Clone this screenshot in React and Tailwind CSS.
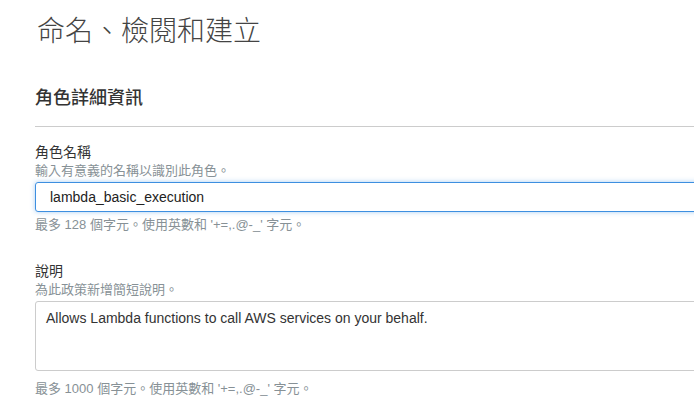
const cjk = "font-['Liberation_Sans','Noto_Sans_CJK_TC',sans-serif]";

function Field({ label, help, hint, children }) {
  return (
    <div>
      <div className="text-[14px] leading-[19px] text-[#333]">{label}</div>
      <div className="text-[13px] leading-[18px] text-[#879196]">{help}</div>
      {children}
      <div className="text-[13px] leading-[18px] text-[#879196]">{hint}</div>
    </div>
  );
}

export default function App() {
  return (
    <div className={`w-[694px] h-[419px] overflow-hidden bg-white ${cjk}`}>
      <div className="w-[780px] pl-[35px]">
        <h1 className="pt-[12px] pl-[2px] text-[28px] leading-[40px] font-light text-[#444]">
          命名、檢閱和建立
        </h1>

        <h2 className="mt-[34px] pb-[16px] border-b border-[#ccc] text-[18px] leading-[24px] font-medium text-[#333]">
          角色詳細資訊
        </h2>

        <div className="mt-[16px]">
          <Field
            label="角色名稱"
            help="輸入有意義的名稱以識別此角色。"
            hint="最多 128 個字元。使用英數和 '+=,.@-_' 字元。"
          >
            <input
              readOnly
              value="lambda_basic_execution"
              className="mt-[2px] mb-[4px] block w-full h-[30px] rounded-[3px] border border-[#3d8fe0] pl-[14px] text-[14px] text-[#222] outline-none shadow-[0_0_5px_rgba(61,143,224,0.45)]"
            />
          </Field>
        </div>

        <div className="mt-[28px]">
          <Field
            label="說明"
            help="為此政策新增簡短說明。"
            hint="最多 1000 個字元。使用英數和 '+=,.@-_' 字元。"
          >
            <textarea
              readOnly
              value="Allows Lambda functions to call AWS services on your behalf."
              className="mt-[2px] mb-[9px] block w-full h-[70px] resize-none rounded-[3px] border border-[#ccc] pl-[10px] pt-[6px] text-[14px] leading-[20px] text-[#333] outline-none"
            />
          </Field>
        </div>
      </div>
    </div>
  );
}
